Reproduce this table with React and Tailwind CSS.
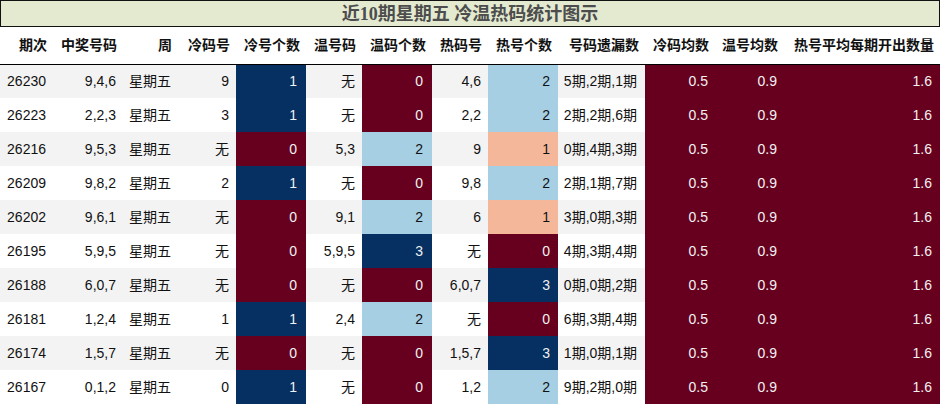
const COLS = [
  { key: "qi", title: "期次", w: 53 },
  { key: "num", title: "中奖号码", w: 70 },
  { key: "week", title: "周", w: 55 },
  { key: "cold", title: "冷码号", w: 58 },
  { key: "coldN", title: "冷号个数", w: 70 },
  { key: "warm", title: "温号码", w: 56 },
  { key: "warmN", title: "温码个数", w: 70 },
  { key: "hot", title: "热码号", w: 56 },
  { key: "hotN", title: "热号个数", w: 70 },
  { key: "miss", title: "号码遗漏数", w: 87 },
  { key: "coldAvg", title: "冷码均数", w: 70 },
  { key: "warmAvg", title: "温号均数", w: 69 },
  { key: "hotAvg", title: "热号平均每期开出数量", w: 156 },
];

const ROWS = [
  ["26230", "9,4,6", "9", 1, "无", 0, "4,6", 2, "5期,2期,1期"],
  ["26223", "2,2,3", "3", 1, "无", 0, "2,2", 2, "2期,2期,6期"],
  ["26216", "9,5,3", "无", 0, "5,3", 2, "9", 1, "0期,4期,3期"],
  ["26209", "9,8,2", "2", 1, "无", 0, "9,8", 2, "2期,1期,7期"],
  ["26202", "9,6,1", "无", 0, "9,1", 2, "6", 1, "3期,0期,3期"],
  ["26195", "5,9,5", "无", 0, "5,9,5", 3, "无", 0, "4期,3期,4期"],
  ["26188", "6,0,7", "无", 0, "无", 0, "6,0,7", 3, "0期,0期,2期"],
  ["26181", "1,2,4", "1", 1, "2,4", 2, "无", 0, "6期,3期,4期"],
  ["26174", "1,5,7", "无", 0, "无", 0, "1,5,7", 3, "1期,0期,1期"],
  ["26167", "0,1,2", "0", 1, "无", 0, "1,2", 2, "9期,2期,0期"],
];

// 0..max 映射到 RdBu
const SHADE = {
  maroon: "bg-[#67001f] text-[#f1f1f1]",
  salmon: "bg-[#f5b799] text-[#111]",
  light: "bg-[#a7cfe4] text-[#111]",
  navy: "bg-[#053061] text-[#f1f1f1]",
};

function countShade(v, max) {
  if (v === 0) return SHADE.maroon;
  if (v === max) return SHADE.navy;
  if (max === 3 && v === 2) return SHADE.light;
  return SHADE.salmon;
}

export default function App() {
  return (
    <div
      className="w-[940px] h-[405px] bg-white overflow-hidden text-[14px] text-[#111]"
      style={{ fontFamily: '"Liberation Sans", "Noto Sans CJK SC", sans-serif' }}
    >
      <div className="h-[27px] border border-[#111] bg-[#e3ead0] flex items-center justify-center">
        <span
          className="text-[18px] font-bold text-[#4d4d4d] leading-none"
          style={{ fontFamily: '"Liberation Serif", "Noto Sans CJK SC", serif' }}
        >
          近10期星期五 冷温热码统计图示
        </span>
      </div>

      <table className="table-fixed border-collapse w-[940px]">
        <colgroup>
          {COLS.map((c) => (
            <col key={c.key} style={{ width: c.w }} />
          ))}
        </colgroup>
        <thead>
          <tr className="h-[37px] border-b border-black">
            {COLS.map((c) => (
              <th key={c.key} className="text-right font-bold pr-[6px] whitespace-nowrap pt-[1px]">
                {c.title}
              </th>
            ))}
          </tr>
        </thead>
        <tbody>
          {ROWS.map((r, i) => {
            const [qi, num, cold, coldN, warm, warmN, hot, hotN, miss] = r;
            const bg = i % 2 === 0 ? "bg-[#f3f3f3]" : "bg-white";
            const td = "text-right pr-[7px] whitespace-nowrap";
            return (
              <tr key={qi} className={`h-[34px] ${bg}`}>
                <td className={`${td} pr-[6px]`}>{qi}</td>
                <td className={`${td} pr-[6px]`}>{num}</td>
                <td className={`${td} pr-[6px]`}>星期五</td>
                <td className={td}>{cold}</td>
                <td className={`${td} pr-[9px] ${countShade(coldN, 1)}`}>{coldN}</td>
                <td className={td}>{warm}</td>
                <td className={`${td} pr-[9px] ${countShade(warmN, 3)}`}>{warmN}</td>
                <td className={`${td} pr-[6px]`}>{hot}</td>
                <td className={`${td} pr-[8px] ${countShade(hotN, 3)}`}>{hotN}</td>
                <td className={`${td} pr-[8px]`}>{miss}</td>
                <td className={`${td} ${SHADE.maroon}`}>0.5</td>
                <td className={`${td} ${SHADE.maroon}`}>0.9</td>
                <td className={`${td} pr-[8px] ${SHADE.maroon}`}>1.6</td>
              </tr>
            );
          })}
        </tbody>
      </table>
    </div>
  );
}
